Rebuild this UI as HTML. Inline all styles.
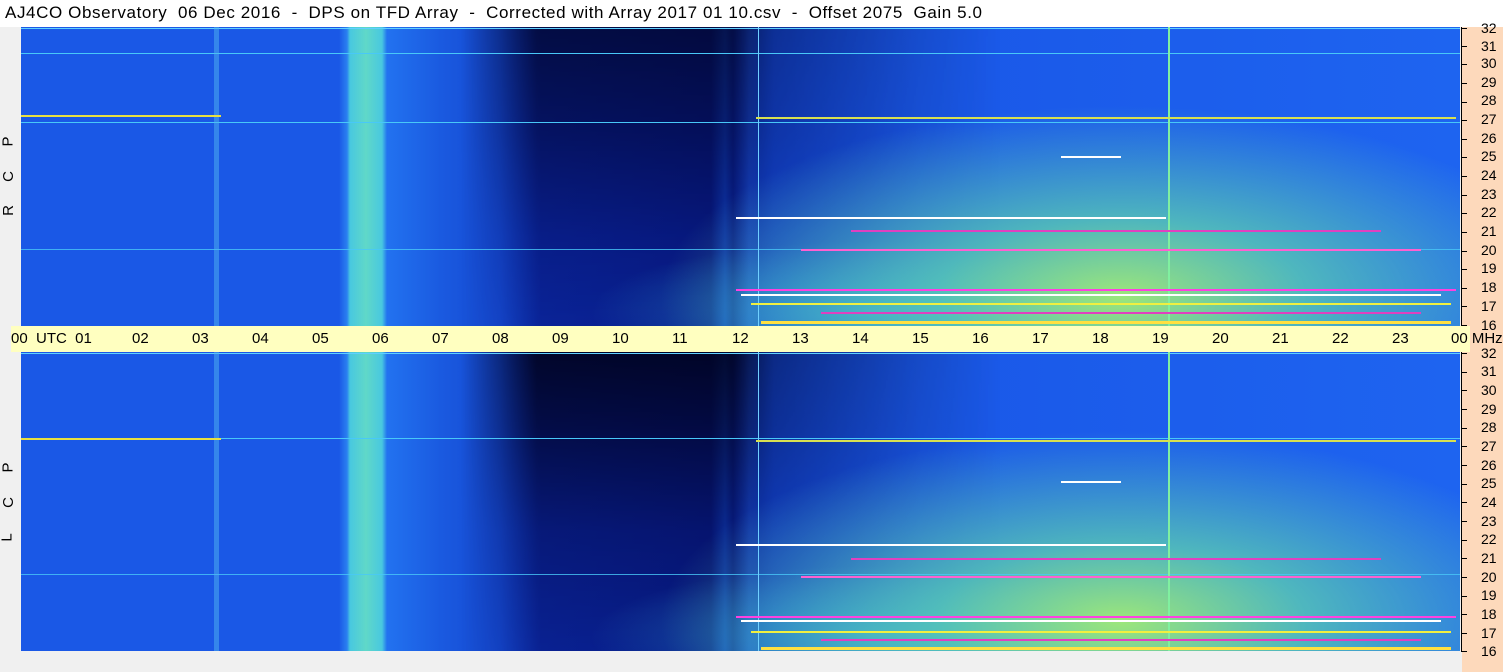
<!DOCTYPE html>
<html><head><meta charset="utf-8"><style>
body{margin:0;width:1503px;height:672px;background:#f0f0f0;position:relative;overflow:hidden;font-family:"Liberation Sans",Tahoma,sans-serif;}
.title{position:absolute;left:0;top:0;width:1503px;height:27px;background:#fff;}
.title span{position:absolute;left:5px;top:3px;font-size:17px;color:#000;white-space:pre;letter-spacing:0.6px}
.plot{position:absolute;left:21px;width:1439px;height:299px;overflow:hidden;
background:linear-gradient(90deg,#1a58e6 0,#1a58e6 318px,#2a80f0 326px,#48c8e0 329px,#60d8c8 345px,#48c8e0 361px,#2272f0 366px,#1a5ae0 420px,#1548d0 480px,#0c2aa8 520px,#0a2298 690px,#1246d0 704px,#0c2aa8 712px,#1a50e0 728px,#1448d8 740px,#1a58e8 900px,#1e64f0 1439px);}
.dark{position:absolute;left:440px;width:540px;top:0;height:100%;background:linear-gradient(180deg,rgba(0,0,25,.7) 0,rgba(0,0,40,.55) 35%,rgba(0,0,60,.3) 70%,rgba(0,0,60,.15) 100%);
-webkit-mask-image:linear-gradient(90deg,transparent 0,#000 14%,#000 50%,rgba(0,0,0,.5) 58%,rgba(0,0,0,.3) 75%,transparent 100%);mask-image:linear-gradient(90deg,transparent 0,#000 14%,#000 50%,rgba(0,0,0,.5) 58%,rgba(0,0,0,.3) 75%,transparent 100%);}
.glow{position:absolute;left:0;top:0;width:100%;height:100%;background:radial-gradient(ellipse 460px 190px at 1100px 90%,rgba(170,245,110,.9) 0,rgba(100,220,170,.7) 40%,rgba(40,140,240,0) 100%),radial-gradient(ellipse 280px 70px at 850px 95%,rgba(60,200,230,.5),rgba(60,200,230,0));}
.hl{position:absolute;left:0;width:100%;height:1px;background:#48c8f8;}
.vl{position:absolute;top:0;height:100%;width:1px;background:#70d0ff;}
.seg{position:absolute;height:2px;}
.band{position:absolute;left:11px;top:326px;width:1459px;height:26px;background:#ffffc0;z-index:2;}
.band .t{position:absolute;top:4px;font-size:15px;white-space:nowrap;}
.right{position:absolute;left:1462px;top:27px;width:41px;height:645px;background:#fdd9bb;}
.axis{position:absolute;left:1461px;width:1px;background:#000;}
.rl{position:absolute;left:1481px;font-size:14px;}
.rt{position:absolute;left:1461px;width:6px;height:1px;background:#000;}
.lt{position:absolute;left:3px;font-size:15px;transform:rotate(-90deg);}
</style></head><body>
<div class="title"><span>AJ4CO Observatory  06 Dec 2016  -  DPS on TFD Array  -  Corrected with Array 2017 01 10.csv  -  Offset 2075  Gain 5.0</span></div>

<div class="plot" style="top:27px">
 <div class="dark"></div>
 <div class="glow"></div>
 <div class="hl" style="top:1px;background:#60d0ff"></div>
 <div class="hl" style="top:26px"></div>
 <div class="hl" style="top:95px"></div>
 <div class="hl" style="top:222px;opacity:.8"></div>
 <div class="vl" style="left:737px"></div>
 <div class="vl" style="left:1147px;background:#80f0a0;width:2px"></div>
 <div class="vl" style="left:193px;width:5px;background:rgba(80,180,240,.5)"></div>
 <div class="seg" style="left:0;top:88px;width:200px;background:#e8e040"></div>
 <div class="seg" style="left:735px;top:90px;width:700px;background:#d8e050"></div>
 <div class="seg" style="left:1040px;top:129px;width:60px;background:#fff"></div>
 <div class="seg" style="left:715px;top:190px;width:430px;background:#fff"></div>
 <div class="seg" style="left:830px;top:203px;width:530px;background:#e040c0"></div>
 <div class="seg" style="left:780px;top:222px;width:620px;background:#ff60d0"></div>
 <div class="seg" style="left:715px;top:262px;width:720px;background:#ff40e0"></div>
 <div class="seg" style="left:720px;top:267px;width:700px;background:#fff"></div>
 <div class="seg" style="left:730px;top:276px;width:700px;background:#f0f040"></div>
 <div class="seg" style="left:800px;top:285px;width:600px;background:#e040c0"></div>
 <div class="seg" style="left:740px;top:294px;width:690px;background:#ffe040;height:3px"></div>
</div>

<div class="band">
 <span class="t" style="left:0">00&nbsp; UTC&nbsp; 01</span>
 <span class="t" style="left:121px">02</span><span class="t" style="left:181px">03</span><span class="t" style="left:241px">04</span><span class="t" style="left:301px">05</span><span class="t" style="left:361px">06</span><span class="t" style="left:421px">07</span><span class="t" style="left:481px">08</span><span class="t" style="left:541px">09</span><span class="t" style="left:601px">10</span><span class="t" style="left:661px">11</span><span class="t" style="left:721px">12</span><span class="t" style="left:781px">13</span><span class="t" style="left:841px">14</span><span class="t" style="left:901px">15</span><span class="t" style="left:961px">16</span><span class="t" style="left:1021px">17</span><span class="t" style="left:1081px">18</span><span class="t" style="left:1141px">19</span><span class="t" style="left:1201px">20</span><span class="t" style="left:1261px">21</span><span class="t" style="left:1321px">22</span><span class="t" style="left:1381px">23</span><span class="t" style="left:1440px">00 MHz</span>
</div>

<div class="plot" style="top:352px">
 <div class="dark" style="background:linear-gradient(180deg,rgba(0,0,20,.85) 0,rgba(0,0,30,.7) 25%,rgba(0,0,50,.4) 60%,rgba(0,0,60,.2) 100%)"></div>
 <div class="glow"></div>
 <div class="hl" style="top:1px;background:#60d0ff"></div>
 <div class="hl" style="top:86px"></div>
 <div class="hl" style="top:222px;opacity:.8"></div>
 <div class="vl" style="left:737px"></div>
 <div class="vl" style="left:1147px;background:#80f0a0;width:2px"></div>
 <div class="vl" style="left:193px;width:5px;background:rgba(80,180,240,.5)"></div>
 <div class="seg" style="left:0;top:86px;width:200px;background:#e8e040"></div>
 <div class="seg" style="left:735px;top:88px;width:700px;background:#d8e050"></div>
 <div class="seg" style="left:1040px;top:129px;width:60px;background:#fff"></div>
 <div class="seg" style="left:715px;top:192px;width:430px;background:#fff"></div>
 <div class="seg" style="left:830px;top:206px;width:530px;background:#e040c0"></div>
 <div class="seg" style="left:780px;top:224px;width:620px;background:#ff60d0"></div>
 <div class="seg" style="left:715px;top:264px;width:720px;background:#ff40e0"></div>
 <div class="seg" style="left:720px;top:268px;width:700px;background:#fff"></div>
 <div class="seg" style="left:730px;top:279px;width:700px;background:#f0f040"></div>
 <div class="seg" style="left:800px;top:287px;width:600px;background:#e040c0"></div>
 <div class="seg" style="left:740px;top:295px;width:690px;background:#ffe040;height:3px"></div>
</div>

<div class="right"></div>
<div class="axis" style="top:27px;height:299px"></div>
<div class="axis" style="top:352px;height:300px"></div>

<span class="lt" style="top:133px">P</span><span class="lt" style="top:168px">C</span><span class="lt" style="top:202px">R</span>
<span class="lt" style="top:459px">P</span><span class="lt" style="top:494px">C</span><span class="lt" style="top:529px">L</span>

<div class="rl" style="top:20px">32</div><div class="rl" style="top:38px">31</div><div class="rl" style="top:55px">30</div><div class="rl" style="top:74px">29</div><div class="rl" style="top:92px">28</div><div class="rl" style="top:111px">27</div><div class="rl" style="top:130px">26</div><div class="rl" style="top:148px">25</div><div class="rl" style="top:167px">24</div><div class="rl" style="top:186px">23</div><div class="rl" style="top:204px">22</div><div class="rl" style="top:223px">21</div><div class="rl" style="top:242px">20</div><div class="rl" style="top:260px">19</div><div class="rl" style="top:279px">18</div><div class="rl" style="top:298px">17</div><div class="rl" style="top:317px">16</div>
<div class="rl" style="top:345px">32</div><div class="rl" style="top:363px">31</div><div class="rl" style="top:382px">30</div><div class="rl" style="top:401px">29</div><div class="rl" style="top:419px">28</div><div class="rl" style="top:438px">27</div><div class="rl" style="top:457px">26</div><div class="rl" style="top:475px">25</div><div class="rl" style="top:494px">24</div><div class="rl" style="top:513px">23</div><div class="rl" style="top:531px">22</div><div class="rl" style="top:550px">21</div><div class="rl" style="top:569px">20</div><div class="rl" style="top:587px">19</div><div class="rl" style="top:606px">18</div><div class="rl" style="top:625px">17</div><div class="rl" style="top:643px">16</div>
<div class="rt" style="top:28px"></div><div class="rt" style="top:46px"></div><div class="rt" style="top:64px"></div><div class="rt" style="top:83px"></div><div class="rt" style="top:102px"></div><div class="rt" style="top:120px"></div><div class="rt" style="top:139px"></div><div class="rt" style="top:157px"></div><div class="rt" style="top:176px"></div><div class="rt" style="top:195px"></div><div class="rt" style="top:213px"></div><div class="rt" style="top:232px"></div><div class="rt" style="top:251px"></div><div class="rt" style="top:269px"></div><div class="rt" style="top:288px"></div><div class="rt" style="top:306px"></div><div class="rt" style="top:325px"></div>
<div class="rt" style="top:353px"></div><div class="rt" style="top:372px"></div><div class="rt" style="top:390px"></div><div class="rt" style="top:409px"></div><div class="rt" style="top:428px"></div><div class="rt" style="top:446px"></div><div class="rt" style="top:465px"></div><div class="rt" style="top:484px"></div><div class="rt" style="top:502px"></div><div class="rt" style="top:521px"></div><div class="rt" style="top:540px"></div><div class="rt" style="top:558px"></div><div class="rt" style="top:577px"></div><div class="rt" style="top:596px"></div><div class="rt" style="top:614px"></div><div class="rt" style="top:633px"></div><div class="rt" style="top:651px"></div>
</body></html>
